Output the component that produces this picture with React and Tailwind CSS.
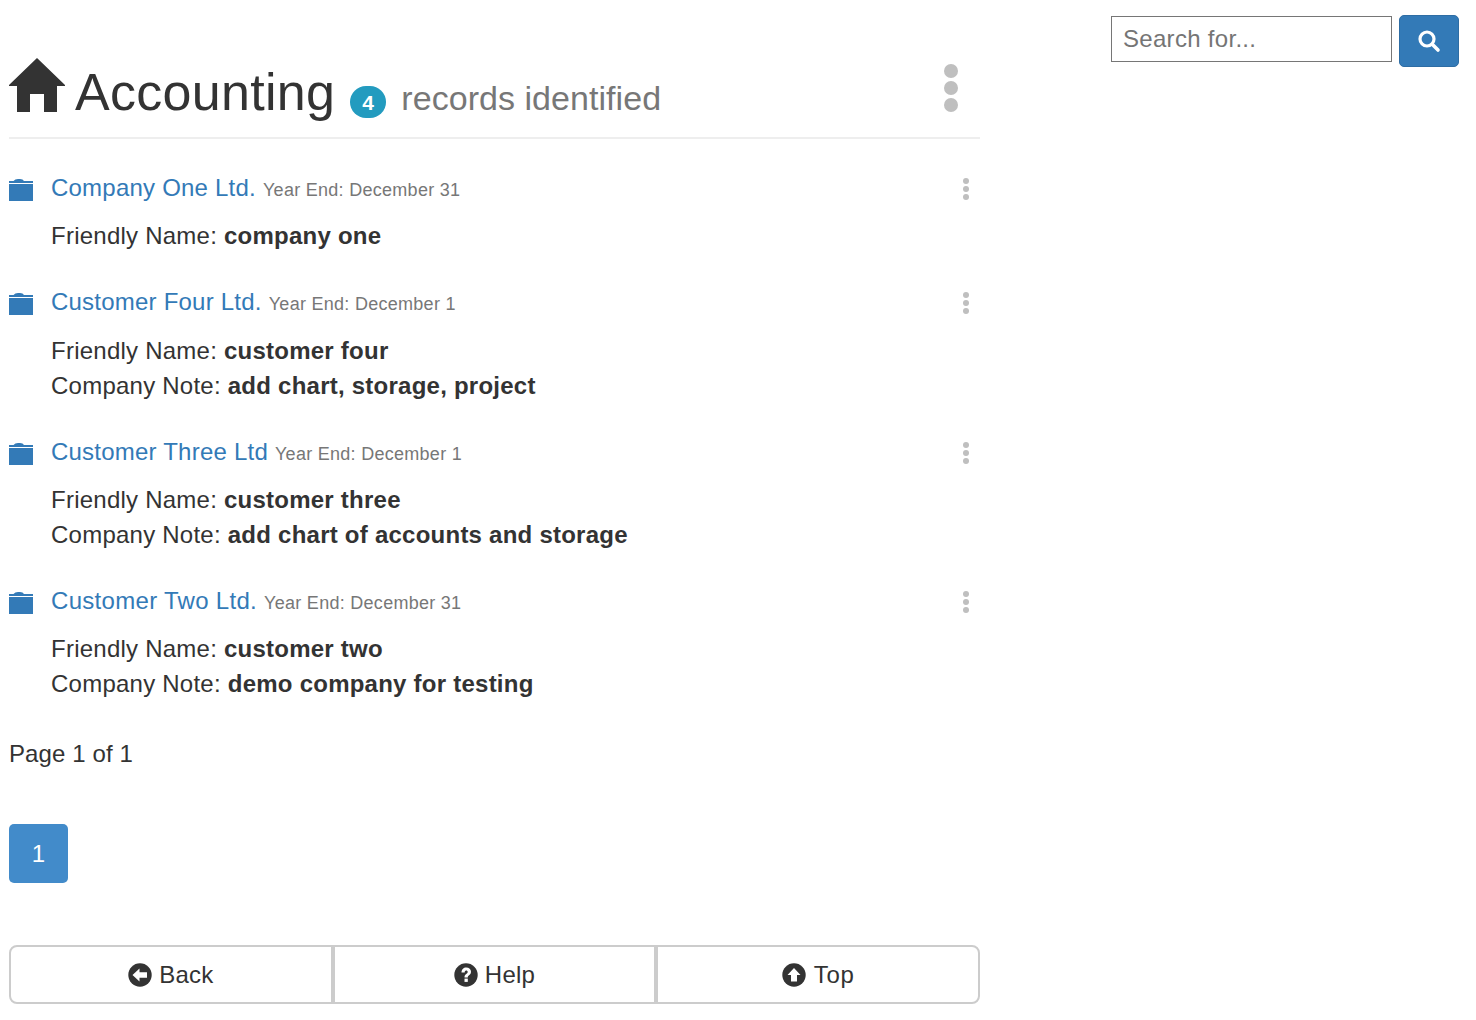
const HomeIcon = () => (
  <svg className="h-[54px] w-[56px] shrink-0" viewBox="0 0 56 54" fill="#333">
    <path d="M28 0 L56 27 V28 H48 V54 H35 V36 H21 V54 H8 V28 H0 V27 Z" />
  </svg>
);

const FolderIcon = () => (
  <svg className="h-[22px] w-[24px] shrink-0" viewBox="0 0 24 22" fill="#337ab7">
    <path d="M4.5 2 Q6 0 9 0 H11 Q14 0 15 2 H24 V4 H0 V2 Z" />
    <rect x="0" y="5" width="24" height="17" />
  </svg>
);

const Dots = ({ size }) => {
  const big = size === 'lg';
  return (
    <div className={big ? 'flex flex-col gap-[3px]' : 'flex flex-col gap-[2px]'}>
      {[0, 1, 2].map((i) => (
        <span key={i} className={big ? 'block h-[14px] w-[14px] rounded-full bg-[#bfbfbf]' : 'block h-[6px] w-[6px] rounded-full bg-[#bfbfbf]'} />
      ))}
    </div>
  );
};

const CircleIcon = ({ type }) => (
  <svg className="h-[24px] w-[24px]" viewBox="0 0 24 24">
    <circle cx="12" cy="12" r="11.7" fill="#333" />
    {type === 'back' && <path d="M4.5 12 L11.5 5.5 V9.2 H19 V14.8 H11.5 V18.5 Z" fill="#fff" />}
    {type === 'top' && <path d="M12 5 L18.5 12 H15 V18.5 H9 V12 H5.5 Z" fill="#fff" />}
    {type === 'help' && (
      <>
        <path d="M7.5 9.5 C7.5 6.5 9.5 4.5 12.3 4.5 C15 4.5 17 6.3 17 8.8 C17 11 15.6 11.9 14.5 12.7 C13.9 13.2 13.8 13.6 13.8 14.5 H10.5 C10.5 12.6 10.9 11.8 12.2 10.9 C13.2 10.2 13.7 9.8 13.7 9 C13.7 8.2 13.1 7.6 12.2 7.6 C11.2 7.6 10.7 8.3 10.7 9.5 Z" fill="#fff" />
        <rect x="10.5" y="15.6" width="3.3" height="3.3" fill="#fff" />
      </>
    )}
  </svg>
);

const records = [
  { name: 'Company One Ltd.', year: 'December 31', friendly: 'company one', top: 'mt-[32px]', gap: 'mt-[10px] pl-[42px]', title: 'tracking-[0.22px]' },
  { name: 'Customer Four Ltd.', year: 'December 1', friendly: 'customer four', note: 'add chart, storage, project', top: 'mt-[32px]', gap: 'mt-[11px] pl-[42px]', title: 'tracking-[0.22px]' },
  { name: 'Customer Three Ltd', year: 'December 1', friendly: 'customer three', note: 'add chart of accounts and storage', top: 'mt-[32px]', gap: 'mt-[10px] pl-[42px]', title: 'tracking-[0.22px]' },
  { name: 'Customer Two Ltd.', year: 'December 31', friendly: 'customer two', note: 'demo company for testing', top: 'mt-[32px]', gap: 'mt-[10px] pl-[42px]', title: 'tracking-[0.3px]' },
];

const footerButtons = [
  { type: 'back', label: 'Back', box: 'flex flex-1 items-center justify-center gap-[7px] border-r-[4px] border-[#ccc]', text: '' },
  { type: 'help', label: 'Help', box: 'flex flex-1 items-center justify-center gap-[7px] border-r-[4px] border-[#ccc]', text: '' },
  { type: 'top', label: 'Top', box: 'flex flex-1 items-center justify-center gap-[8px]', text: 'tracking-[0.8px]' },
];

export default function App() {
  return (
    <div className="relative h-[1020px] overflow-hidden bg-white pl-[9px] font-['Liberation_Sans',Arial,sans-serif] text-[24px] leading-[35px] tracking-[0.24px] text-[#333]">
      {/* Search */}
      <div className="absolute left-[1111px] top-[15px] flex items-start gap-[7px]">
        <input
          placeholder="Search for..."
          className="mt-[1px] h-[46px] w-[281px] border border-[#767676] bg-white px-[11px] text-[24px] tracking-[0.3px] text-[#555] outline-none placeholder:text-[#757575]"
        />
        <button className="flex h-[52px] w-[60px] items-center justify-center rounded-[5px] border border-[#2e6da4] bg-[#337ab7]">
          <svg className="h-[24px] w-[24px]" viewBox="0 0 24 24" fill="none" stroke="#fff">
            <circle cx="10" cy="10" r="7" strokeWidth="3.2" />
            <path d="M15.5 15.5 L21 21" strokeWidth="3.6" strokeLinecap="round" />
          </svg>
        </button>
      </div>

      <div className="w-[971px]">
        {/* Header */}
        <div className="flex h-[139px] items-start border-b-2 border-[#eee] pt-[58px]">
          <HomeIcon />
          <h1 className="ml-[10px] mt-[6px] text-[52px] leading-[57px] font-normal tracking-[0.3px]">Accounting</h1>
          <span className="ml-[15px] mt-[28px] flex h-[32px] w-[36px] items-center justify-center rounded-full bg-[#239bbf] text-[21px] font-bold leading-none text-white">4</span>
          <span className="ml-[15px] mt-[20px] text-[34px] leading-[40px] tracking-[0.05px] text-[#777]">records identified</span>
          <div className="ml-auto mr-[22px] mt-[6px]"><Dots size="lg" /></div>
        </div>

        {/* Records */}
        {records.map((r) => (
          <div key={r.name} className={r.top}>
            <div className="flex items-start">
              <div className="mt-[8px] w-[42px]"><FolderIcon /></div>
              <a className={`-mt-[1px] text-[24px] leading-[35px] text-[#337ab7] ${r.title}`}>{r.name}</a>
              <span className="ml-[7px] mt-[2px] text-[18px] leading-[35px] tracking-[0.28px] text-[#777]">Year End: {r.year}</span>
              <div className="ml-auto mr-[11px] mt-[7px]"><Dots /></div>
            </div>
            <div className={r.gap}>
              <p>Friendly Name: <b>{r.friendly}</b></p>
              {r.note && <p>Company Note: <b>{r.note}</b></p>}
            </div>
          </div>
        ))}

        <p className="mt-[35px] tracking-[0.1px]">Page 1 of 1</p>

        <div className="mt-[53px] flex h-[59px] w-[59px] items-center justify-center rounded-[5px] bg-[#428bca] text-white">1</div>

        {/* Footer buttons */}
        <div className="mt-[62px] flex h-[59px] rounded-[8px] border-2 border-[#ccc]">
          {footerButtons.map((b) => (
            <div key={b.label} className={b.box}>
              <CircleIcon type={b.type} />
              <span className={b.text}>{b.label}</span>
            </div>
          ))}
        </div>
      </div>
    </div>
  );
}
